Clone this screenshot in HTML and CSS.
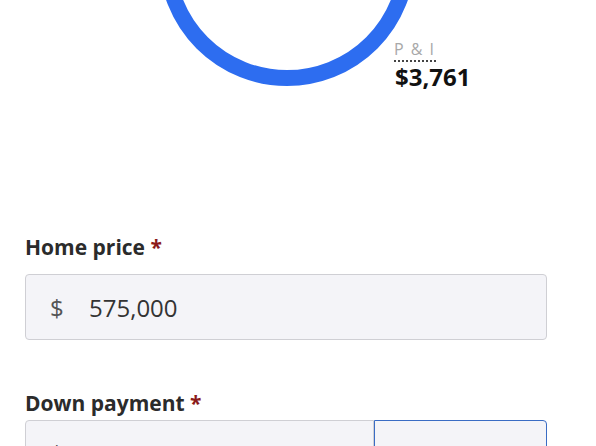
FILE: index.html
```html
<!DOCTYPE html>
<html lang="en">
<head>
    <meta charset="UTF-8">
    <meta name="viewport" content="width=device-width, initial-scale=1.0">
    <title>Mortgage Calculator</title>
    <link rel="stylesheet" href="styles.css">
</head>
<body>
    <div class="chart">
        <svg class="donut" width="596" height="100" viewBox="0 0 596 100">
            <circle cx="287" cy="-42" r="120" fill="none" stroke="#2d6df0" stroke-width="16"/>
        </svg>
        <div class="legend">
            <span class="legend-label">P &amp; I</span>
            <span class="legend-value">$3,761</span>
        </div>
    </div>

    <form class="calc">
        <div class="field">
            <label class="field-label">Home price <span class="req">*</span></label>
            <div class="input">
                <span class="prefix">$</span>
                <span class="value">575,000</span>
            </div>
        </div>

        <div class="field field-split">
            <label class="field-label">Down payment <span class="req">*</span></label>
            <div class="input-group">
                <div class="input">
                    <span class="prefix">$</span>
                    <span class="value">45,000</span>
                </div>
                <div class="input input-pct">
                    <span class="value">7.8260</span>
                    <span class="suffix">%</span>
                </div>
            </div>
        </div>
    </form>
</body>
</html>
```

FILE: styles.css
```css
* {
    margin: 0;
    padding: 0;
    box-sizing: border-box;
}

body {
    font-family: "Open Sans", Arial, sans-serif;
    color: #2b2b2b;
    background: white;
    overflow: hidden;
}

.chart {
    position: relative;
    height: 232px;
}

.donut {
    display: block;
}

.legend {
    position: absolute;
    left: 395px;
    top: 39px;
    display: flex;
    flex-direction: column;
    align-items: flex-start;
}

.legend-label {
    font-size: 16px;
    font-weight: 400;
    color: #a8a8a8;
    letter-spacing: 1.5px;
    line-height: 20px;
    border-bottom: 2px dotted #444;
    padding-bottom: 1px;
    margin-left: -1px;
}

.legend-value {
    font-size: 24px;
    font-weight: 700;
    color: #111;
    line-height: 30px;
    margin-top: 0;
}

.calc {
    padding: 0 49px 0 25px;
}

.field {
    margin-bottom: 48px;
}

.field-label {
    display: block;
    font-size: 21px;
    font-weight: 700;
    color: #2b2b2b;
    line-height: 30px;
    margin-bottom: 12px;
}

.field-split .field-label {
    margin-bottom: 2px;
}

.req {
    color: #8b1a1a;
}

.input {
    display: flex;
    align-items: center;
    height: 66px;
    padding: 0 24px;
    background: #f4f4f8;
    border: 1px solid #cfcfd4;
    border-radius: 4px;
    font-size: 24px;
    color: #333;
}

.prefix {
    width: 39px;
    color: #555;
}

.input-group {
    display: flex;
}

.input-group .input {
    flex: 1;
    border-radius: 4px 0 0 4px;
}

.input-group .input-pct {
    flex: 0 0 173px;
    border: 1px solid #3a6cc4;
    border-radius: 0 4px 4px 0;
    justify-content: space-between;
}

.suffix {
    color: #555;
}
```
